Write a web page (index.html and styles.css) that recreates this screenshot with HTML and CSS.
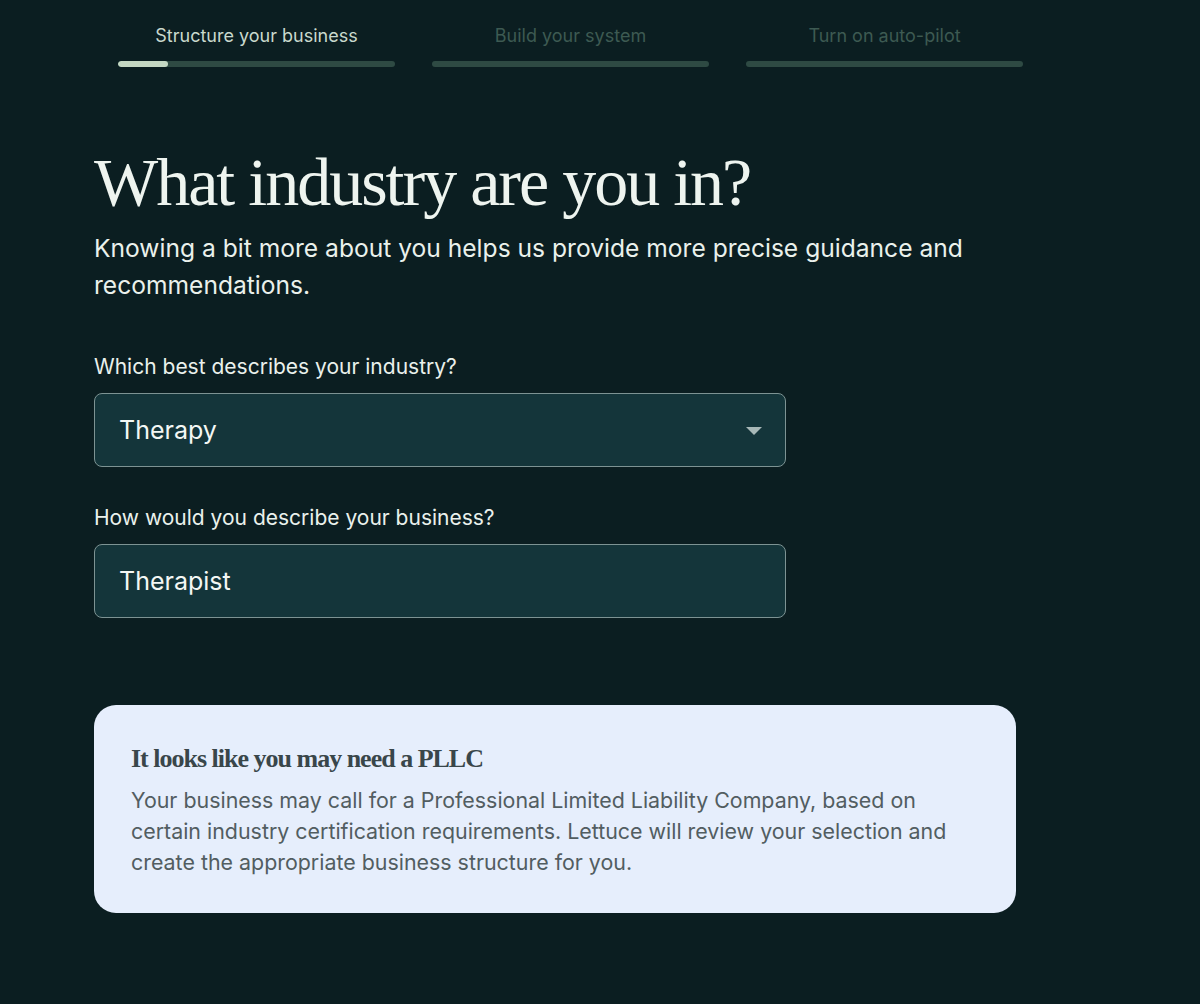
FILE: index.html
```html
<!DOCTYPE html>
<html lang="en">
<head>
    <meta charset="utf-8">
    <meta name="viewport" content="width=device-width, initial-scale=1.0">
    <title>What industry are you in?</title>
    <link rel="stylesheet" href="styles.css">
</head>
<body>
    <div class="onboard-wrapper">
        <div class="steps">
            <div class="step step-active">
                <div class="step-label">Structure your business</div>
                <div class="step-track"><div class="step-fill" style="width: 18%;"></div></div>
            </div>
            <div class="step">
                <div class="step-label">Build your system</div>
                <div class="step-track"></div>
            </div>
            <div class="step">
                <div class="step-label">Turn on auto-pilot</div>
                <div class="step-track"></div>
            </div>
        </div>

        <div class="onboard-content">
            <h1 class="onboard-title">What industry are you in?</h1>
            <p class="onboard-subtitle">Knowing a bit more about you helps us provide more precise guidance and recommendations.</p>

            <div class="form-group">
                <label for="industry">Which best describes your industry?</label>
                <div class="select-wrap">
                    <select id="industry" class="form-control">
                        <option selected>Therapy</option>
                    </select>
                    <span class="select-arrow"></span>
                </div>
            </div>

            <div class="form-group">
                <label for="business">How would you describe your business?</label>
                <input type="text" id="business" class="form-control" value="Therapist">
            </div>

            <div class="notice">
                <h2 class="notice-title">It looks like you may need a PLLC</h2>
                <p class="notice-text">Your business may call for a Professional Limited Liability Company, based on certain industry certification requirements. Lettuce will review your selection and create the appropriate business structure for you.</p>
            </div>
        </div>
    </div>
</body>
</html>
```

FILE: styles.css
```css
* {
    box-sizing: border-box;
}

html, body {
    margin: 0;
    padding: 0;
    background-color: #0b1e21;
}

body {
    font-family: Inter, "Noto Sans", sans-serif;
    color: #eaf1ec;
    min-height: 1004px;
}

.onboard-wrapper {
    padding: 0 0 0 94px;
}

/* Barra de pasos */
.steps {
    display: flex;
    gap: 37px;
    padding: 25px 0 0 24px;
    width: 929px;
}

.step {
    flex: 1;
}

.step-label {
    text-align: center;
    font-size: 18px;
    line-height: 22px;
    color: #3d5a52;
}

.step-active .step-label {
    color: #c9d9cd;
}

.step-track {
    margin-top: 14px;
    height: 6px;
    border-radius: 3px;
    background-color: #2e4a43;
    overflow: hidden;
}

.step-fill {
    height: 100%;
    border-radius: 3px;
    background-color: #c4d8c3;
}

/* Contenido */
.onboard-content {
    width: 922px;
}

.onboard-title {
    font-family: "Liberation Serif", "DejaVu Serif", serif;
    font-weight: 400;
    font-size: 68px;
    line-height: 80px;
    letter-spacing: -2px;
    color: #eef4ef;
    margin: 75px 0 0;
}

.onboard-subtitle {
    font-size: 24.6px;
    line-height: 37px;
    margin: 8px 0 0;
    width: 900px;
    color: #eaf1ec;
}

.form-group {
    margin-top: 50px;
}

.form-group + .form-group {
    margin-top: 38px;
}

.form-group label {
    display: block;
    font-size: 21px;
    line-height: 26px;
    margin-bottom: 13px;
    color: #eaf1ec;
}

.form-control {
    display: block;
    width: 692px;
    height: 74px;
    padding: 0 24px;
    background-color: #14353a;
    border: 1.5px solid #7d9393;
    border-radius: 8px;
    color: #f3f7f4;
    font-family: inherit;
    font-size: 25px;
    outline: none;
}

select.form-control {
    appearance: none;
    -webkit-appearance: none;
}

.select-wrap {
    position: relative;
    width: 692px;
}

.select-arrow {
    position: absolute;
    right: 24px;
    top: 34px;
    width: 0;
    height: 0;
    border-left: 8px solid transparent;
    border-right: 8px solid transparent;
    border-top: 8px solid #a7b8b7;
}

/* Aviso PLLC */
.notice {
    margin-top: 87px;
    padding: 38px 37px 35px;
    background-color: #e6eefc;
    border-radius: 22px;
}

.notice-title {
    font-family: "Liberation Serif", "DejaVu Serif", serif;
    font-weight: 700;
    font-size: 26px;
    line-height: 32px;
    letter-spacing: -1px;
    color: #39464a;
    margin: 0 0 10px;
}

.notice-text {
    font-size: 21.4px;
    line-height: 31px;
    color: #525d61;
    margin: 0;
}
```
